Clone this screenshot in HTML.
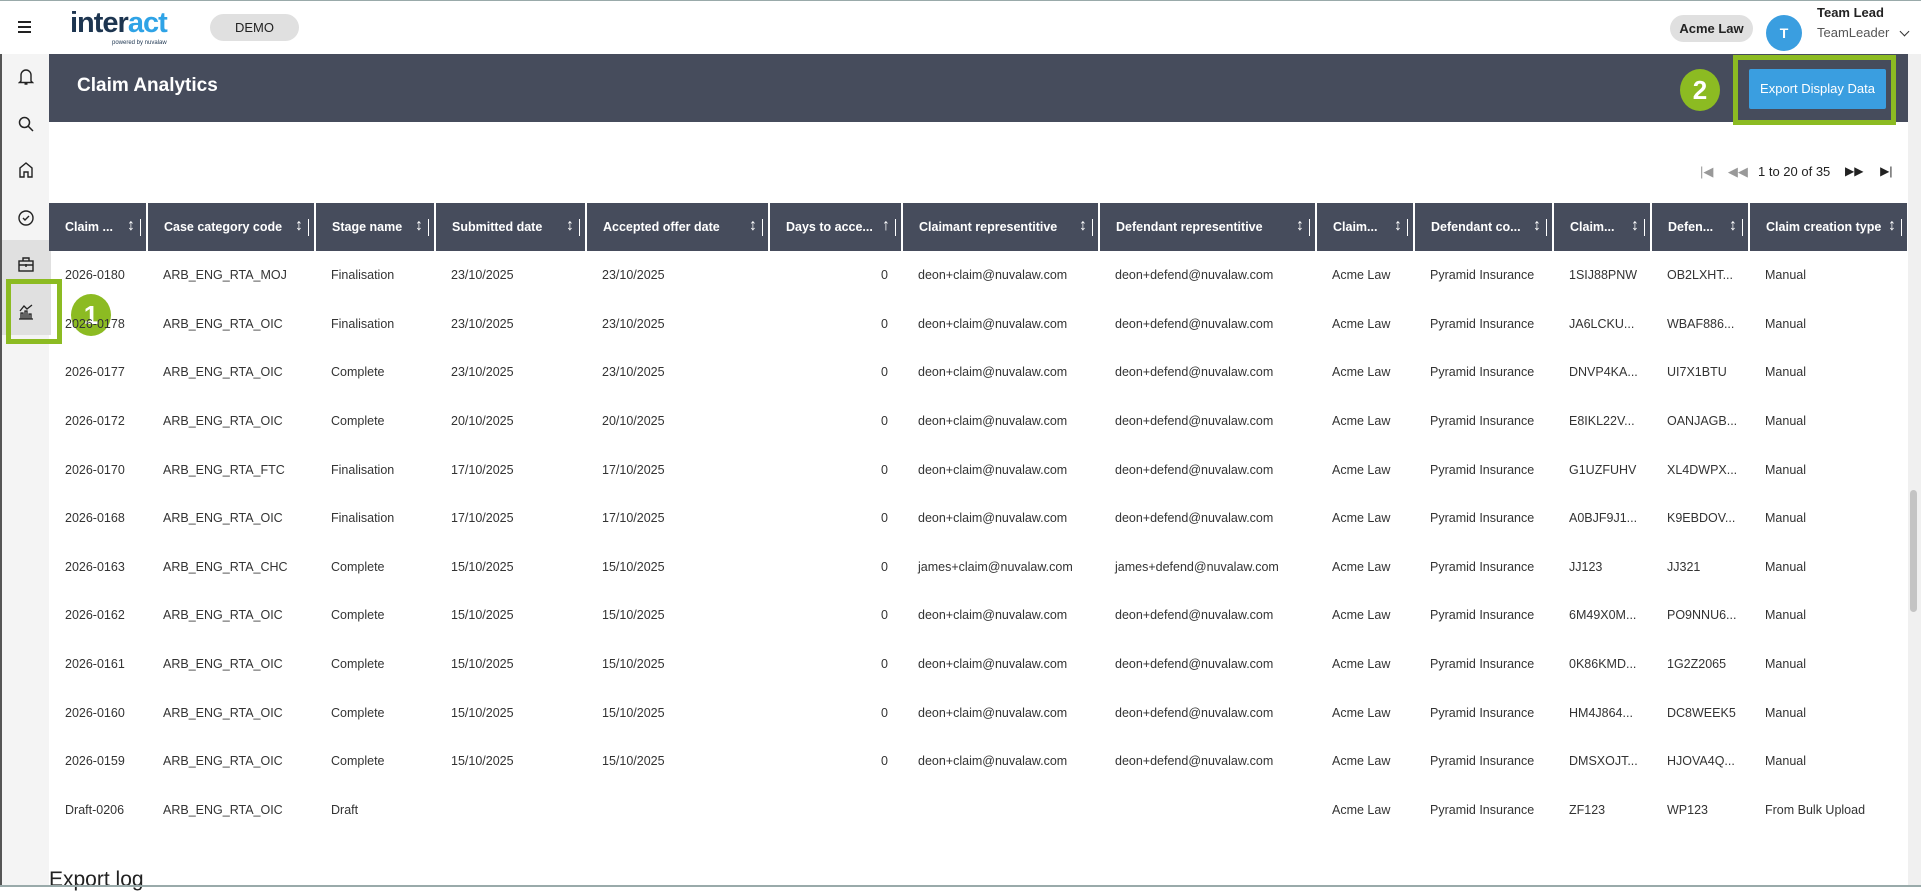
<!DOCTYPE html>
<html><head><meta charset="utf-8"><style>
*{box-sizing:border-box;margin:0;padding:0}
body{width:1921px;height:887px;overflow:hidden;background:#fff;font-family:"Liberation Sans",Arial,sans-serif;color:#222;position:relative}
.top{position:absolute;left:0;top:0;width:1921px;height:54px;background:#fff;border-top:1px solid #9aa;}
.side{position:absolute;left:0;top:54px;width:49px;height:833px;background:#f4f4f4;border-left:2px solid #555}
.ham{position:absolute;left:18px;top:20px;width:13px}
.ham i{display:block;height:2px;background:#222;margin-bottom:3px}
.logo{position:absolute;left:70px;top:6px;font-size:29px;font-weight:bold;letter-spacing:-1px;color:#1d3550}
.logo span{color:#2fa3e6}
.logo small{position:absolute;left:42px;top:33px;font-size:6px;font-weight:normal;letter-spacing:0;color:#1d3550;white-space:nowrap}
.pill{position:absolute;background:#e0e0e0;border-radius:14px;font-size:13px;text-align:center;color:#222}
.band{position:absolute;left:49px;top:54px;width:1862px;height:68px;background:#464c5c}
.band h1{position:absolute;left:28px;top:21px;color:#fff;font-size:19px;font-weight:bold}
.btn{position:absolute;left:1749px;top:69px;width:137px;height:40px;background:#3a9ee0;color:#fff;font-size:13px;line-height:40px;text-align:center;border-radius:2px}
.gbox{position:absolute;border:5px solid #8cbb22}
.circ{position:absolute;border-radius:50%;background:#8cbb22;color:#fff;font-weight:bold;text-align:center;font-size:26px}
table{position:absolute;left:49px;top:203px;width:1858px;border-collapse:collapse;table-layout:fixed;font-size:12.5px}
th{background:#464c5c;color:#fff;height:48px;text-align:left;font-weight:bold;padding-left:16px;border-left:2px solid #fff;position:relative;white-space:nowrap;overflow:hidden}
th:first-child{border-left:none}
th b{position:absolute;right:11px;top:14px;font-size:16px}
th b:after{content:"";position:absolute;right:-6px;top:2px;width:1px;height:17px;background:#fff}
td{height:48.6px;padding-left:16px;white-space:nowrap;overflow:hidden;color:#333}
td.r{text-align:right;padding-right:14px}
.icon{position:absolute;left:16px}
</style></head><body>
<div class="top">
<div class="ham"><i></i><i></i><i></i></div>
<div class="logo">inter<span>act</span><small>powered by nuvalaw</small></div>
<div class="pill" style="left:210px;top:13px;width:89px;height:27px;line-height:27px">DEMO</div>
<div class="pill" style="left:1670px;top:14px;width:83px;height:27px;line-height:27px;font-weight:bold">Acme Law</div>
<div style="position:absolute;left:1766px;top:14px;width:36px;height:36px;border-radius:50%;background:#3a9ee0;color:#fff;font-weight:bold;text-align:center;line-height:36px;font-size:14px">T</div>
<div style="position:absolute;left:1817px;top:4px;font-size:13px;font-weight:bold">Team Lead</div>
<div style="position:absolute;left:1817px;top:24px;font-size:13px;color:#555">TeamLeader</div>
<div style="position:absolute;left:1901px;top:27px;width:7px;height:7px;border-right:1.5px solid #333;border-bottom:1.5px solid #333;transform:rotate(45deg)"></div>
</div>
<div class="side">
<div style="position:absolute;left:0;top:186px;width:49px;height:95px;background:#e0e0e0"></div>
<svg class="icon" style="top:14px" width="16" height="18" viewBox="0 0 16 18" fill="none" stroke="#222" stroke-width="1.4"><path d="M3 13V7a5 5 0 0110 0v6l1.5 1.5h-13z M6.5 16h3"/></svg>
<svg class="icon" style="top:62px" width="16" height="16" viewBox="0 0 16 16" fill="none" stroke="#222" stroke-width="1.5"><circle cx="6.5" cy="6.5" r="5"/><path d="M10 10l5 5"/></svg>
<svg class="icon" style="top:108px" width="16" height="16" viewBox="0 0 16 16" fill="none" stroke="#222" stroke-width="1.4"><path d="M2 15V6l6-5 6 5v9h-4v-5H6v5z"/></svg>
<svg class="icon" style="top:156px" width="16" height="16" viewBox="0 0 16 16" fill="none" stroke="#222" stroke-width="1.4"><circle cx="8" cy="8" r="7"/><path d="M5 8l2 2 4-4"/></svg>
<svg class="icon" style="top:203px" width="16" height="15" viewBox="0 0 16 15" fill="none" stroke="#222" stroke-width="1.4"><rect x="1" y="4" width="14" height="10"/><path d="M5 4V1h6v3M1 8h14M8 7v3"/></svg>
<svg class="icon" style="top:250px" width="16" height="16" viewBox="0 0 16 16" fill="none" stroke="#222" stroke-width="1.3"><path d="M1 15h14M3 15V9h2v6M7 15V7h2v8M11 15V10h2v5M2 7l4-5 3 3 5-4"/></svg>
</div>
<div class="gbox" style="left:6px;top:279px;width:56px;height:65px"></div>
<div class="circ" style="left:71px;top:294px;width:40px;height:42px;line-height:42px">1</div>
<div class="band"><h1>Claim Analytics</h1></div>
<div class="btn">Export Display Data</div>
<div class="gbox" style="left:1733px;top:55px;width:163px;height:70px"></div>
<div class="circ" style="left:1680px;top:69px;width:40px;height:42px;line-height:42px">2</div>
<div style="position:absolute;left:1700px;top:164px;font-size:13px;color:#999">|◀&nbsp;&nbsp;&nbsp;&nbsp;◀◀</div>
<div style="position:absolute;left:1758px;top:164px;font-size:13px">1 to 20 of 35</div>
<div style="position:absolute;left:1845px;top:164px;font-size:12px;color:#222">▶▶&nbsp;&nbsp;&nbsp;&nbsp;&nbsp;▶|</div>
<table>
<colgroup><col style="width:98px"><col style="width:168px"><col style="width:120px"><col style="width:151px"><col style="width:183px"><col style="width:133px"><col style="width:197px"><col style="width:217px"><col style="width:98px"><col style="width:139px"><col style="width:98px"><col style="width:98px"><col style="width:158px"></colgroup>
<tr><th>Claim ...<b>↕</b></th><th>Case category code<b>↕</b></th><th>Stage name<b>↕</b></th><th>Submitted date<b>↕</b></th><th>Accepted offer date<b>↕</b></th><th>Days to acce...<b>↑</b></th><th>Claimant representitive<b>↕</b></th><th>Defendant representitive<b>↕</b></th><th>Claim...<b>↕</b></th><th>Defendant co...<b>↕</b></th><th>Claim...<b>↕</b></th><th>Defen...<b>↕</b></th><th>Claim creation type<b>↕</b></th></tr>
<tr><td>2026-0180</td><td>ARB_ENG_RTA_MOJ</td><td>Finalisation</td><td>23/10/2025</td><td>23/10/2025</td><td class="r">0</td><td>deon+claim@nuvalaw.com</td><td>deon+defend@nuvalaw.com</td><td>Acme Law</td><td>Pyramid Insurance</td><td>1SIJ88PNW</td><td>OB2LXHT...</td><td>Manual</td></tr>
<tr><td>2026-0178</td><td>ARB_ENG_RTA_OIC</td><td>Finalisation</td><td>23/10/2025</td><td>23/10/2025</td><td class="r">0</td><td>deon+claim@nuvalaw.com</td><td>deon+defend@nuvalaw.com</td><td>Acme Law</td><td>Pyramid Insurance</td><td>JA6LCKU...</td><td>WBAF886...</td><td>Manual</td></tr>
<tr><td>2026-0177</td><td>ARB_ENG_RTA_OIC</td><td>Complete</td><td>23/10/2025</td><td>23/10/2025</td><td class="r">0</td><td>deon+claim@nuvalaw.com</td><td>deon+defend@nuvalaw.com</td><td>Acme Law</td><td>Pyramid Insurance</td><td>DNVP4KA...</td><td>UI7X1BTU</td><td>Manual</td></tr>
<tr><td>2026-0172</td><td>ARB_ENG_RTA_OIC</td><td>Complete</td><td>20/10/2025</td><td>20/10/2025</td><td class="r">0</td><td>deon+claim@nuvalaw.com</td><td>deon+defend@nuvalaw.com</td><td>Acme Law</td><td>Pyramid Insurance</td><td>E8IKL22V...</td><td>OANJAGB...</td><td>Manual</td></tr>
<tr><td>2026-0170</td><td>ARB_ENG_RTA_FTC</td><td>Finalisation</td><td>17/10/2025</td><td>17/10/2025</td><td class="r">0</td><td>deon+claim@nuvalaw.com</td><td>deon+defend@nuvalaw.com</td><td>Acme Law</td><td>Pyramid Insurance</td><td>G1UZFUHV</td><td>XL4DWPX...</td><td>Manual</td></tr>
<tr><td>2026-0168</td><td>ARB_ENG_RTA_OIC</td><td>Finalisation</td><td>17/10/2025</td><td>17/10/2025</td><td class="r">0</td><td>deon+claim@nuvalaw.com</td><td>deon+defend@nuvalaw.com</td><td>Acme Law</td><td>Pyramid Insurance</td><td>A0BJF9J1...</td><td>K9EBDOV...</td><td>Manual</td></tr>
<tr><td>2026-0163</td><td>ARB_ENG_RTA_CHC</td><td>Complete</td><td>15/10/2025</td><td>15/10/2025</td><td class="r">0</td><td>james+claim@nuvalaw.com</td><td>james+defend@nuvalaw.com</td><td>Acme Law</td><td>Pyramid Insurance</td><td>JJ123</td><td>JJ321</td><td>Manual</td></tr>
<tr><td>2026-0162</td><td>ARB_ENG_RTA_OIC</td><td>Complete</td><td>15/10/2025</td><td>15/10/2025</td><td class="r">0</td><td>deon+claim@nuvalaw.com</td><td>deon+defend@nuvalaw.com</td><td>Acme Law</td><td>Pyramid Insurance</td><td>6M49X0M...</td><td>PO9NNU6...</td><td>Manual</td></tr>
<tr><td>2026-0161</td><td>ARB_ENG_RTA_OIC</td><td>Complete</td><td>15/10/2025</td><td>15/10/2025</td><td class="r">0</td><td>deon+claim@nuvalaw.com</td><td>deon+defend@nuvalaw.com</td><td>Acme Law</td><td>Pyramid Insurance</td><td>0K86KMD...</td><td>1G2Z2065</td><td>Manual</td></tr>
<tr><td>2026-0160</td><td>ARB_ENG_RTA_OIC</td><td>Complete</td><td>15/10/2025</td><td>15/10/2025</td><td class="r">0</td><td>deon+claim@nuvalaw.com</td><td>deon+defend@nuvalaw.com</td><td>Acme Law</td><td>Pyramid Insurance</td><td>HM4J864...</td><td>DC8WEEK5</td><td>Manual</td></tr>
<tr><td>2026-0159</td><td>ARB_ENG_RTA_OIC</td><td>Complete</td><td>15/10/2025</td><td>15/10/2025</td><td class="r">0</td><td>deon+claim@nuvalaw.com</td><td>deon+defend@nuvalaw.com</td><td>Acme Law</td><td>Pyramid Insurance</td><td>DMSXOJT...</td><td>HJOVA4Q...</td><td>Manual</td></tr>
<tr><td>Draft-0206</td><td>ARB_ENG_RTA_OIC</td><td>Draft</td><td></td><td></td><td></td><td></td><td></td><td>Acme Law</td><td>Pyramid Insurance</td><td>ZF123</td><td>WP123</td><td>From Bulk Upload</td></tr>
</table>
<div style="position:absolute;left:49px;top:868px;font-size:21px;color:#222">Export log</div>
<div style="position:absolute;left:1908px;top:54px;width:13px;height:833px;background:#f0f0f0"></div>
<div style="position:absolute;left:1910px;top:490px;width:7px;height:122px;background:#c4c4c4;border-radius:4px"></div>
<div style="position:absolute;left:0;top:885px;width:1921px;height:2px;background:#9aa"></div>
</body></html>
